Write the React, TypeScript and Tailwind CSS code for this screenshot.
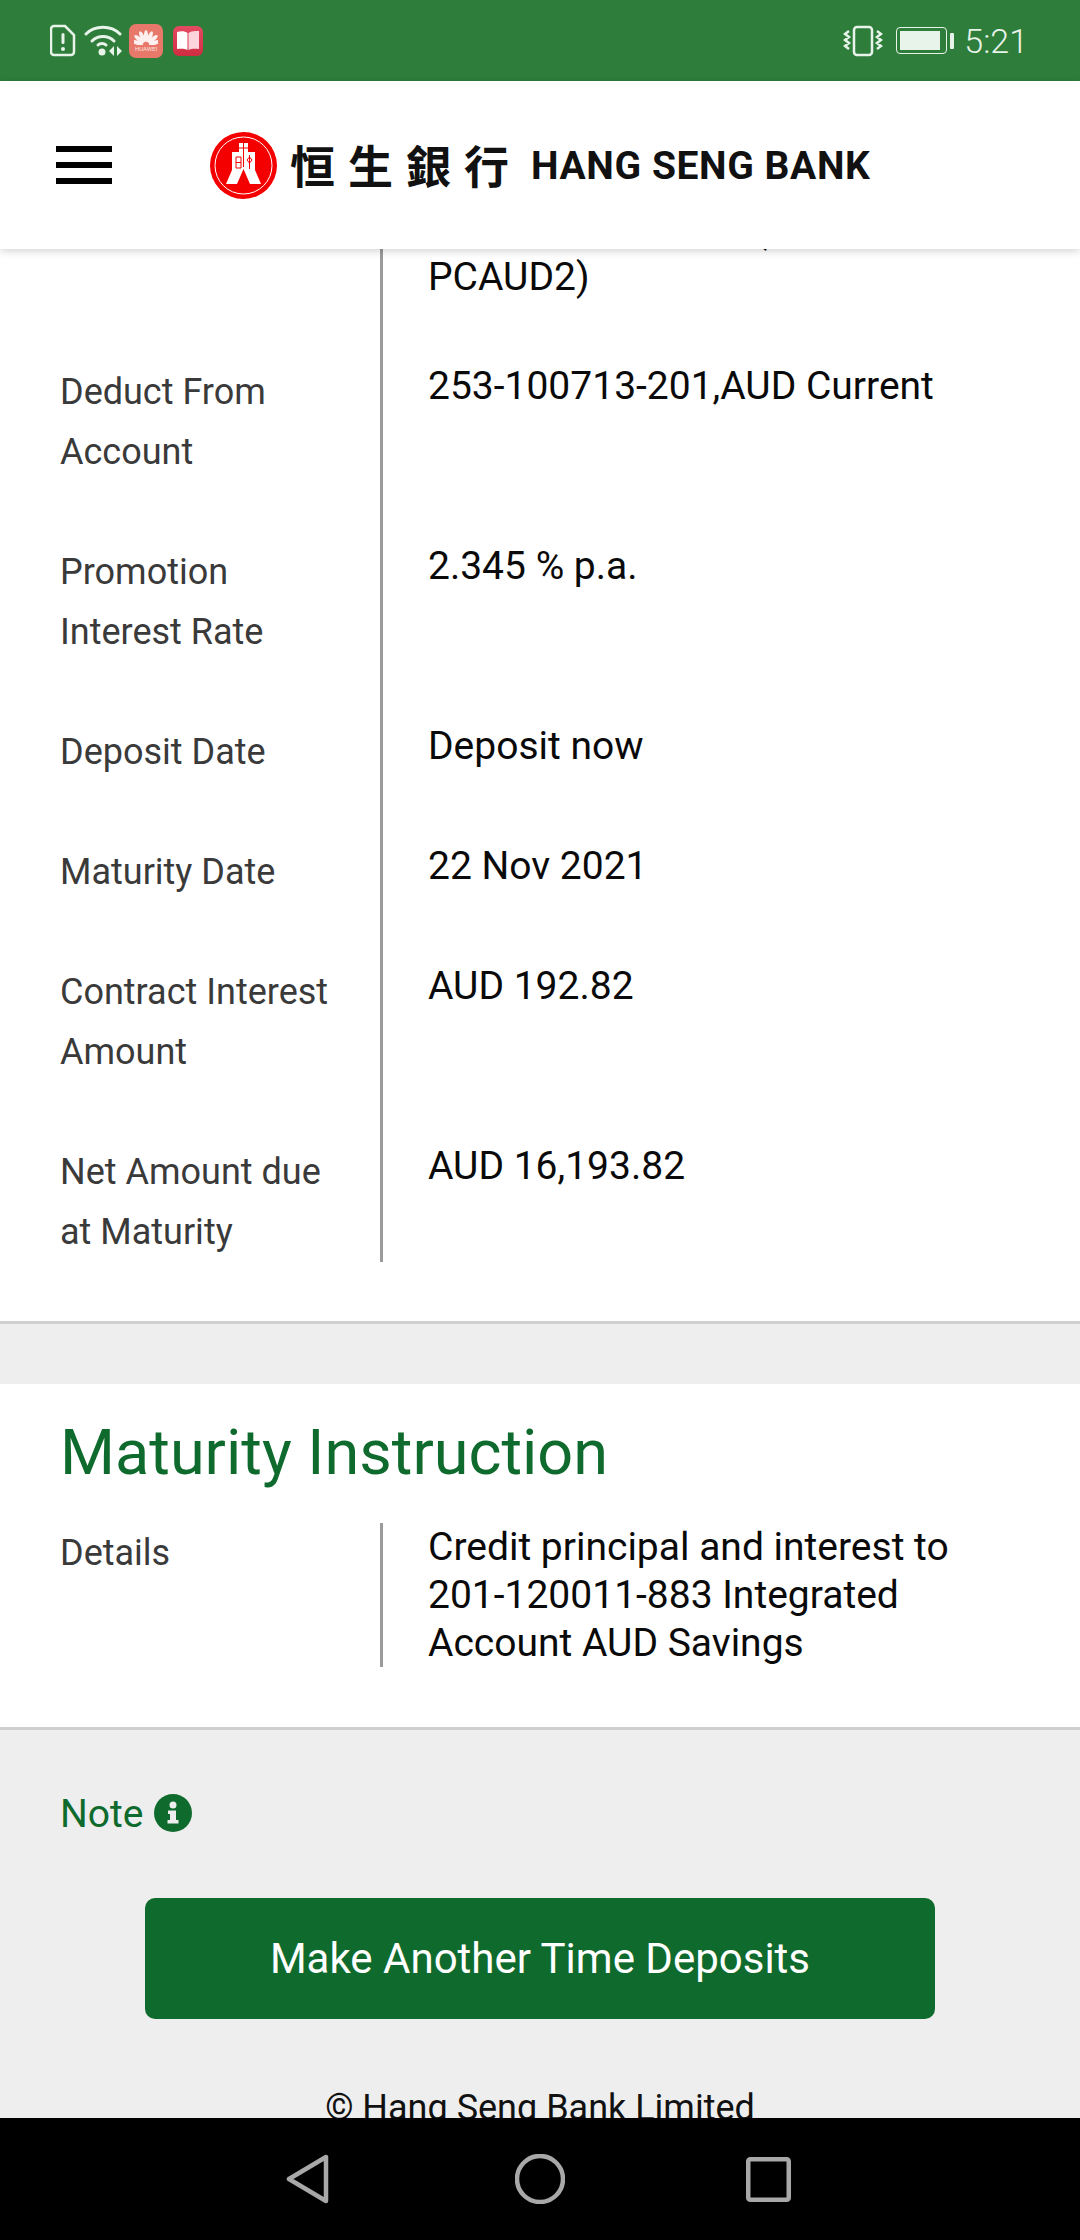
const FONT = "font-['Roboto',sans-serif]";

type Row = { label: string[]; value: string[]; last?: boolean };

const ROWS: Row[] = [
  { label: ['Deduct From', 'Account'], value: ['253-100713-201,AUD Current'] },
  { label: ['Promotion', 'Interest Rate'], value: ['2.345 % p.a.'] },
  { label: ['Deposit Date'], value: ['Deposit now'] },
  { label: ['Maturity Date'], value: ['22 Nov 2021'] },
  { label: ['Contract Interest', 'Amount'], value: ['AUD 192.82'] },
  { label: ['Net Amount due', 'at Maturity'], value: ['AUD 16,193.82'], last: true },
];

const PETALS = [-75, -50, -25, 0, 25, 50, 75];

function StatusBar() {
  return (
    <div className="h-[81px] shrink-0 bg-[#2e7d3a] flex items-center justify-between pl-[50px] pr-[52px] text-[#e8f3ea]">
      <div className="flex items-center">
        <svg width="26" height="33" viewBox="0 0 26 33" fill="none">
          <path d="M4 2h11l9 9v17a3 3 0 0 1-3 3H4a3 3 0 0 1-3-3V5a3 3 0 0 1 3-3z" stroke="#e8f3ea" strokeWidth="2.5" />
          <rect x="11.5" y="9" width="3" height="11" rx="1.5" fill="#e8f3ea" />
          <circle cx="13" cy="25" r="2" fill="#e8f3ea" />
        </svg>
        <svg className="ml-[8px]" width="38" height="32" viewBox="0 0 38 32" fill="none">
          <path d="M2 9C11 0 27 0 36 9" stroke="#e8f3ea" strokeWidth="3" strokeLinecap="round" />
          <path d="M8 16C14 10 24 10 30 16" stroke="#e8f3ea" strokeWidth="3" strokeLinecap="round" />
          <circle cx="18" cy="27" r="3.5" fill="#e8f3ea" />
          <path d="M14 20c2-2 6-2 8 0" stroke="#e8f3ea" strokeWidth="3" strokeLinecap="round" />
          <path d="M30 21v10l-5-5zM33 21v10l5-5z" fill="#e8f3ea" />
        </svg>
        <div className="ml-[7px] w-[34px] h-[34px] rounded-[7px] bg-[#e8786a] flex flex-col items-center overflow-hidden">
          <svg className="mt-[4px]" width="24" height="17" viewBox="0 0 24 17" fill="#fdf0ee">
            {PETALS.map(deg => (
              <ellipse key={deg} cx="12" cy="8" rx="2.100" ry="6" transform={`rotate(${deg} 12 17)`} />
            ))}
          </svg>
          <div className="text-[6px] leading-[7px] text-[#fde3df] whitespace-nowrap">HUAWEI</div>
        </div>
        <div className="ml-[10px] w-[30px] h-[30px] rounded-[6px] bg-linear-to-b from-[#e44a62] to-[#cf2c40] flex items-center justify-center">
          <svg width="24" height="22" viewBox="0 0 24 22">
            <path d="M1 2c4-1 8-1 10.500 1v17C9 18.500 5 18.500 1 19z" fill="#ffffff" />
            <path d="M23 1c-4 0-8 0-10.500 2v17c2.500-1.500 6.500-1.500 10.500-1z" fill="#fbd5db" />
          </svg>
        </div>
      </div>
      <div className="flex items-center">
        <svg width="40" height="32" viewBox="0 0 40 32" fill="none">
          <rect x="11" y="2" width="18" height="28" rx="3" stroke="#e8f3ea" strokeWidth="2.500" />
          <path d="M6 6l-4 3 4 3-4 3 4 3-4 3 4 3M34 6l4 3-4 3 4 3-4 3 4 3-4 3" stroke="#e8f3ea" strokeWidth="2.500" />
        </svg>
        <div className="ml-[13px] w-[51px] h-[27px] rounded-[4px] border border-[#e8f3ea] p-[3px]">
          <div className="w-[40px] h-full bg-[#e8f3ea]" />
        </div>
        <div className="ml-[3px] w-[4px] h-[16px] rounded-[1px] bg-[#e8f3ea]" />
        <span className={`${FONT} ml-[10px] text-[34px] leading-[40px] font-light`}>5:21</span>
      </div>
    </div>
  );
}

function Logo() {
  return (
    <div className="flex items-center">
      <svg width="67" height="67" viewBox="0 0 67 67">
        <circle cx="33.5" cy="33.5" r="33.5" fill="#f40000" />
        <circle cx="33.5" cy="33.5" r="28.5" fill="none" stroke="#ffffff" strokeWidth="1" />
        <path d="M29 11h9v9h7v18l6 14H40l-6.500-15L27 52H16l6-14V20h7z" fill="#ffffff" />
        <path d="M33.500 11v24M28 16h11M26 25h5v11h-5zM26 30.500h5M39.500 23v14M37 28l2.500-3 2.500 3-2.500 3z" stroke="#f40000" strokeWidth="1" fill="none" />
      </svg>
      <span className="ml-[13px] w-[230px] text-[45px] leading-[56px] font-bold tracking-[13px] text-[#111] whitespace-nowrap font-['Noto_Sans_CJK_TC',sans-serif]">
        恒生銀行
      </span>
      <span className={`${FONT} ml-[11px] mt-[2px] text-[39px] leading-[44px] font-bold tracking-[0.6px] text-[#111] whitespace-nowrap`}>
        HANG SENG BANK
      </span>
    </div>
  );
}

function Header() {
  return (
    <div className="relative z-10 h-[168px] shrink-0 bg-white shadow-[0_2px_8px_rgba(0,0,0,0.18)] flex items-center pl-[56px]">
      <div className="flex flex-col gap-[10px] w-[56px]">
        <div className="h-[6px] bg-black" />
        <div className="h-[6px] bg-black" />
        <div className="h-[6px] bg-black" />
      </div>
      <div className="ml-[98px]">
        <Logo />
      </div>
    </div>
  );
}

function DetailRow({ row }: { row: Row }) {
  return (
    <div className="flex">
      <div className={`w-[323px] ml-[60px] shrink-0 border-r-[3px] border-[#9a9a9a] text-[36px] leading-[60px] text-[#3a3a3a] ${row.last ? '' : 'pb-[60px]'}`}>
        {row.label.map(l => (
          <div key={l}>{l}</div>
        ))}
      </div>
      <div className="pl-[45px] text-[39px] leading-[48px] text-[#0a0a0a]">
        {row.value.map(v => (
          <div key={v}>{v}</div>
        ))}
      </div>
    </div>
  );
}

export default function App() {
  return (
    <div className={`${FONT} w-[1080px] h-[2240px] flex flex-col overflow-hidden bg-[#eeeeee]`}>
      <StatusBar />
      <Header />
      <main className="flex-1 min-h-0 overflow-hidden">
        <section className="bg-white border-b-[3px] border-[#cfcfcf] pb-[59px]">
          <div className="flex">
            <div className="w-[323px] ml-[60px] shrink-0 h-[113px] border-r-[3px] border-[#9a9a9a]" />
            <div className="pl-[45px] text-[39px] leading-[48px] text-[#0a0a0a]">
              <div className="-mt-[44px] tracking-[-0.8px]">Standard Rate AUD (</div>
              <div>PCAUD2)</div>
            </div>
          </div>
          {ROWS.map(row => (
            <DetailRow key={row.label[0]} row={row} />
          ))}
        </section>

        <section className="mt-[60px] bg-white border-b-[3px] border-[#cfcfcf] pb-[60px]">
          <h2 className="ml-[60px] pt-[27px] text-[63px] leading-[84px] text-[#0f6b2d]">Maturity Instruction</h2>
          <div className="flex mt-[28px]">
            <div className="w-[323px] ml-[60px] shrink-0 border-r-[3px] border-[#9a9a9a] text-[36px] leading-[60px] text-[#3a3a3a]">
              Details
            </div>
            <div className="pl-[45px] text-[39px] leading-[48px] text-[#0a0a0a]">
              <div>Credit principal and interest to</div>
              <div>201-120011-883 Integrated</div>
              <div>Account AUD Savings</div>
            </div>
          </div>
        </section>

        <div className="ml-[60px] mt-[59px] flex items-center text-[39px] leading-[50px] text-[#0f6b2d]">
          Note
          <svg className="ml-[10px] mb-[2px]" width="38" height="38" viewBox="0 0 38 38">
            <circle cx="19" cy="19" r="19" fill="#0f6b2d" />
            <circle cx="19" cy="11" r="3.500" fill="#eeeeee" />
            <path d="M14 16.500h8V26h2.500v3.500h-11V26H16v-6h-2z" fill="#eeeeee" />
          </svg>
        </div>

        <button className="block mx-auto mt-[59px] w-[790px] h-[121px] rounded-[10px] bg-[#0f6b2d] text-white text-[42px]">
          Make Another Time Deposits
        </button>

        <div className="mt-[65px] text-center text-[36px] leading-[48px] text-[#111]">© Hang Seng Bank Limited</div>
      </main>
      <nav className="h-[122px] shrink-0 bg-black flex items-center justify-center pr-[3px]">
        <svg width="44" height="50" viewBox="0 0 44 50" fill="none">
          <path d="M40 3v44L3 25z" stroke="#a8a8a8" strokeWidth="4.500" strokeLinejoin="round" />
        </svg>
        <svg className="ml-[185px]" width="50" height="50" viewBox="0 0 50 50" fill="none">
          <circle cx="25" cy="25" r="23" stroke="#a8a8a8" strokeWidth="4.500" />
        </svg>
        <svg className="ml-[181px]" width="45" height="45" viewBox="0 0 45 45" fill="none">
          <rect x="2.250" y="2.250" width="40.500" height="40.500" rx="2" stroke="#a8a8a8" strokeWidth="4.500" />
        </svg>
      </nav>
    </div>
  );
}
